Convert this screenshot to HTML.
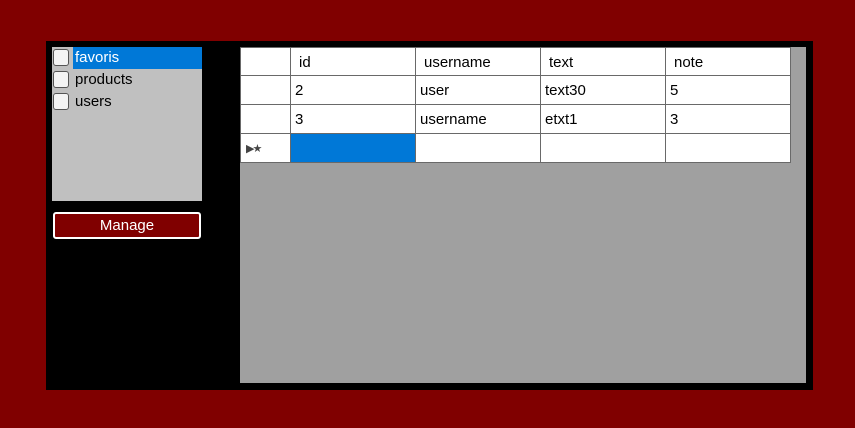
<!DOCTYPE html>
<html><head><style>
*{margin:0;padding:0;box-sizing:border-box}
body{width:855px;height:428px;background:#800000;position:relative;font-family:"Liberation Sans",sans-serif;font-size:15px;overflow:hidden}
.a{position:absolute}
.cell{position:absolute;background:#fff;border-right:1px solid #696969;border-bottom:1px solid #696969;color:#000;padding-left:4px;line-height:30px}
.cb{position:absolute;left:1px;width:16px;height:17px;border:1px solid #555;border-radius:3px;background:#f4f4f4}
.item{position:absolute;left:0;width:150px;height:22px;line-height:22px;padding-left:23px;color:#000;font-size:15px}
</style></head><body>
<div class="a" style="left:46px;top:41px;width:767px;height:349px;background:#000"></div>
<div class="a" style="left:52px;top:47px;width:150px;height:154px;background:#c0c0c0">
 <div class="item" style="top:0;"><div class="a" style="left:21px;top:0;width:129px;height:22px;background:#0078d7"></div><span style="position:relative;color:#fff">favoris</span><div class="cb" style="top:2px"></div></div>
 <div class="item" style="top:22px"><span>products</span><div class="cb" style="top:2px"></div></div>
 <div class="item" style="top:44px"><span>users</span><div class="cb" style="top:2px"></div></div>
</div>
<div class="a" style="left:53px;top:212px;width:148px;height:27px;background:#800000;border:2px solid #fff;border-radius:3px;color:#fff;text-align:center;line-height:24px;font-size:15px">Manage</div>
<div class="a" style="left:240px;top:47px;width:566px;height:336px;background:#a0a0a0"></div>
<div class="a" style="left:240px;top:47px;width:551px;height:116px;background:#fff;border-left:1px solid #696969;border-top:1px solid #696969"></div>
<div class="cell" style="left:241px;top:48px;width:50px;height:28px"></div>
<div class="cell" style="left:291px;top:48px;width:125px;height:28px;padding-left:8px">id</div>
<div class="cell" style="left:416px;top:48px;width:125px;height:28px;padding-left:8px">username</div>
<div class="cell" style="left:541px;top:48px;width:125px;height:28px;padding-left:8px">text</div>
<div class="cell" style="left:666px;top:48px;width:125px;height:28px;padding-left:8px">note</div>
<div class="cell" style="left:241px;top:76px;width:50px;height:29px"></div>
<div class="cell" style="left:291px;top:76px;width:125px;height:29px">2</div>
<div class="cell" style="left:416px;top:76px;width:125px;height:29px">user</div>
<div class="cell" style="left:541px;top:76px;width:125px;height:29px">text30</div>
<div class="cell" style="left:666px;top:76px;width:125px;height:29px">5</div>
<div class="cell" style="left:241px;top:105px;width:50px;height:29px"></div>
<div class="cell" style="left:291px;top:105px;width:125px;height:29px">3</div>
<div class="cell" style="left:416px;top:105px;width:125px;height:29px">username</div>
<div class="cell" style="left:541px;top:105px;width:125px;height:29px">etxt1</div>
<div class="cell" style="left:666px;top:105px;width:125px;height:29px">3</div>
<div class="cell" style="left:241px;top:134px;width:50px;height:29px;font-size:11px;color:#444;padding-left:5px;letter-spacing:-2px">▶★</div>
<div class="cell" style="left:291px;top:134px;width:125px;height:29px;background:#0078d7"></div>
<div class="cell" style="left:416px;top:134px;width:125px;height:29px"></div>
<div class="cell" style="left:541px;top:134px;width:125px;height:29px"></div>
<div class="cell" style="left:666px;top:134px;width:125px;height:29px"></div>
</body></html>
